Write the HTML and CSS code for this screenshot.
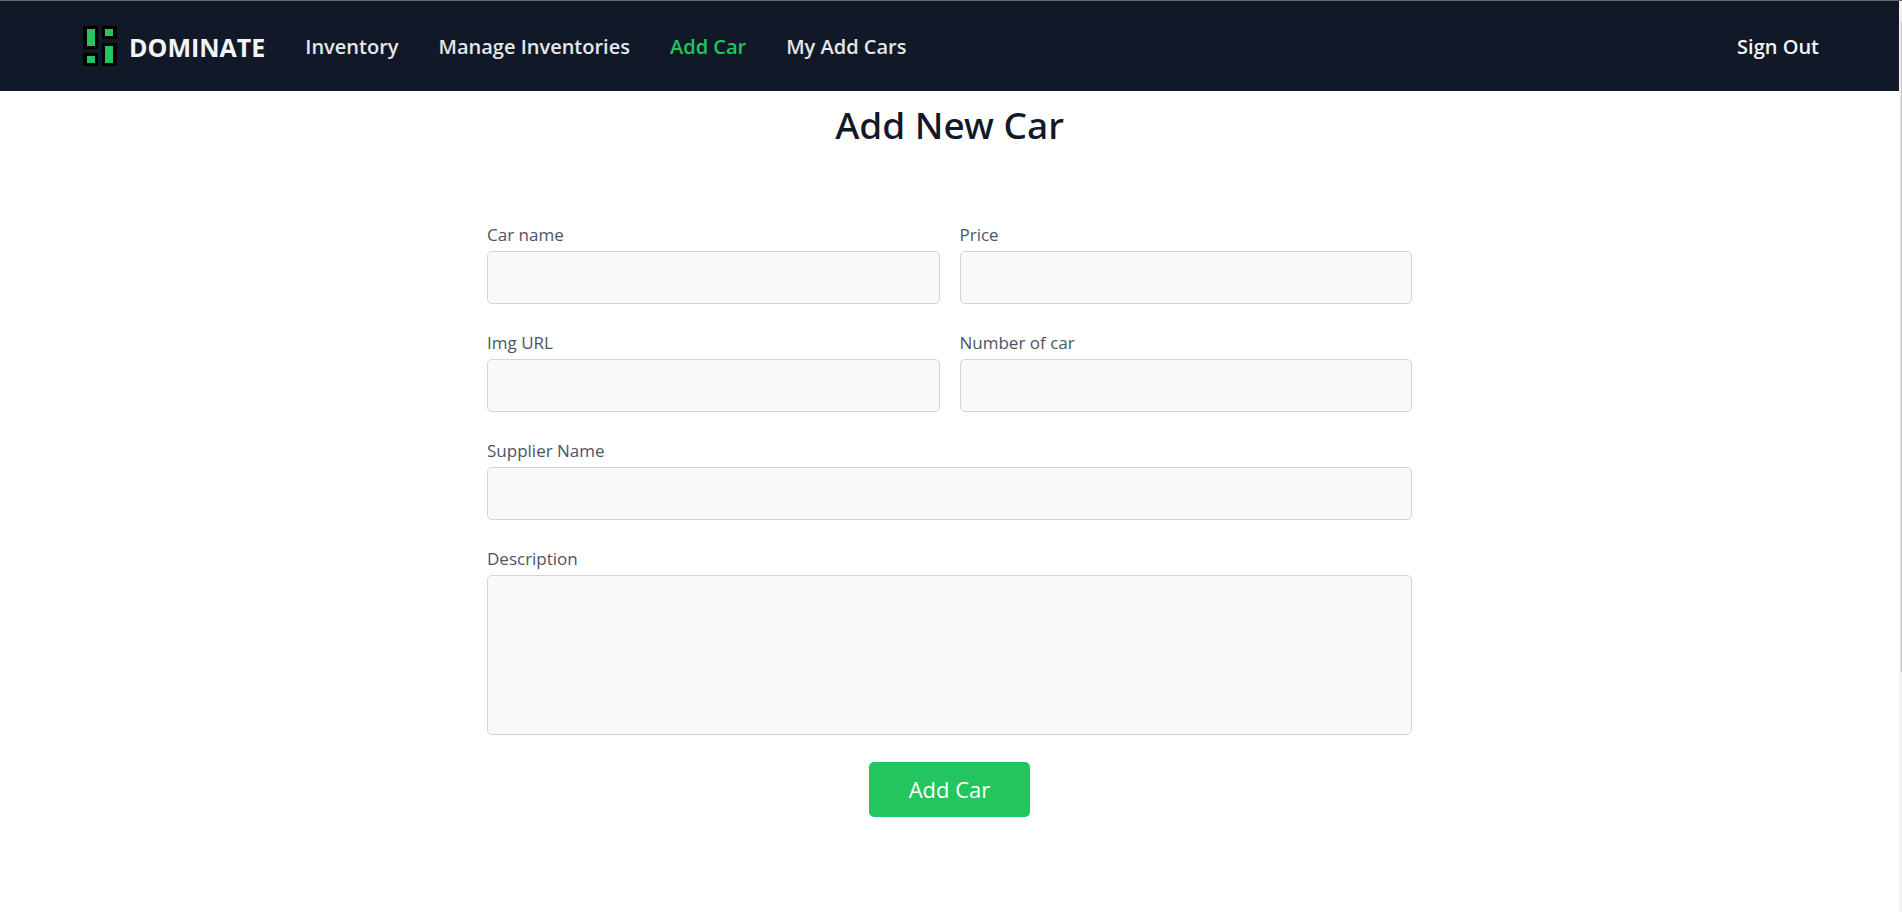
FILE: index.html
```html
<!DOCTYPE html>
<html lang="en">
<head>
<meta charset="utf-8">
<meta name="viewport" content="width=device-width, initial-scale=1">
<title>Add New Car</title>
<link rel="stylesheet" href="styles.css">
</head>
<body>
<div class="page">
  <header class="navbar">
    <a class="brand" href="#">
      <svg class="brand-icon" viewBox="0 0 34 40" aria-hidden="true">
        <path fill="#000" stroke="#000" stroke-width="2" stroke-linejoin="round" d="M1 1h13v21H1zM20 1h13v11H20zM20 18h13v21H20zM1 28h13v11H1z"/>
        <path fill="#22c55e" d="M4 3h8v17H4zM22 3h8v7h-8zM22 20h8v17h-8zM4 30h8v7H4z"/>
      </svg>
      <span class="brand-name">DOMINATE</span>
    </a>
    <nav class="links">
      <a class="link" href="#">Inventory</a>
      <a class="link" href="#">Manage Inventories</a>
      <a class="link active" href="#">Add Car</a>
      <a class="link" href="#">My Add Cars</a>
    </nav>
    <button class="sign-out" type="button">Sign Out</button>
  </header>
  <main class="content">
    <h1 class="title">Add New Car</h1>
    <form class="form">
      <div class="field"><label class="label" for="name">Car name</label><input class="input" id="name" type="text"></div>
      <div class="field"><label class="label" for="price">Price</label><input class="input" id="price" type="text"></div>
      <div class="field"><label class="label" for="img">Img URL</label><input class="input" id="img" type="text"></div>
      <div class="field"><label class="label" for="number">Number of car</label><input class="input" id="number" type="text"></div>
      <div class="field wide"><label class="label" for="supplier">Supplier Name</label><input class="input" id="supplier" type="text"></div>
      <div class="field wide"><label class="label" for="description">Description</label><textarea class="input area" id="description"></textarea></div>
      <button class="submit" type="submit">Add Car</button>
    </form>
  </main>
</div>
<div class="scroll-track" aria-hidden="true"><div class="scroll-thumb"></div></div>
</body>
</html>
```
FILE: styles.css
```css
* { box-sizing: border-box; }

body {
  display: flex;
  min-height: 100vh;
  margin: 0;
  border-top: 1px solid #666;
  background: #fff;
  color: #111827;
  font-family: "Segoe UI", "Open Sans", "Noto Sans", sans-serif;
}

button, input, textarea { font: inherit; }

.page { flex: 1; }

.navbar {
  display: flex;
  align-items: center;
  gap: 40px;
  padding: 25px 80px 25px 83px;
  background: #111827;
  color: #e5e7eb;
}

.brand {
  display: flex;
  align-items: center;
  gap: 12px;
  color: #f3f4f6;
  text-decoration: none;
}

.brand-icon { width: 34px; height: 40px; }

.brand-name { padding-top: 2px; font-size: 25px; font-weight: 700; line-height: 38px; }

.links { display: flex; flex: 1; gap: 40px; }

.link, .sign-out {
  padding: 2px 0 0;
  font-size: 20px;
  font-weight: 600;
  line-height: 30px;
}

.link { color: inherit; text-decoration: none; }

.link.active { color: #22c55e; }

.sign-out { border: 0; background: none; color: #f3f4f6; }

.content {
  max-width: 925px;
  margin: 0 auto;
  padding: 10px 0 40px;
}

.title {
  margin: 0 0 72px;
  font-family: "Segoe UI", "Noto Sans", "Open Sans", sans-serif;
  font-size: 37px;
  font-weight: 500;
  line-height: 48px;
  text-align: center;
}

.form {
  display: grid;
  grid-template-columns: 1fr 1fr;
  gap: 25px 20px;
}

.field { display: flex; flex-direction: column; }

.wide { grid-column: 1 / -1; }

.label {
  margin-bottom: 2px;
  color: #4b5563;
  font-size: 17px;
  line-height: 28px;
}

.input {
  width: 100%;
  height: 53px;
  padding: 5px 15px;
  border: 1px solid #d1d5db;
  border-radius: 5px;
  background: #f9f9f9;
  outline: none;
}

.area { height: 160px; resize: none; }

.submit {
  grid-column: 1 / -1;
  justify-self: center;
  margin-top: 2px;
  padding: 10px 40px;
  border: 0;
  border-radius: 5px;
  background: #22c55e;
  color: #fff;
  font-size: 22px;
  line-height: 35px;
}

.scroll-track { width: 3px; padding: 21px 0 0 2px; background: #f1f1f1; }

.scroll-thumb { height: 73%; background: #c1c1c1; }
```
